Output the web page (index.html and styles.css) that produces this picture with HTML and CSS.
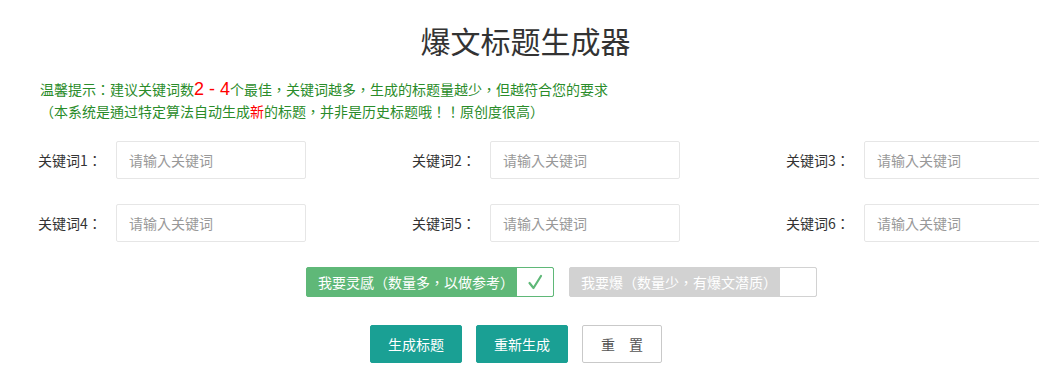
FILE: index.html
```html
<!DOCTYPE html>
<html lang="zh-CN">
<head>
  <meta charset="UTF-8">
  <meta name="viewport" content="width=device-width, initial-scale=1.0">
  <title>爆文标题生成器</title>

  <link rel="stylesheet" href="styles.css">
</head>

<body>
  <div class="page" lang="zh-TW">
    <h1 class="title" lang="zh-CN">爆文标题生成器</h1>

    <div class="tips">
      <p>温馨提示：建议关键词数<span class="num">2 - 4</span>个最佳，关键词越多，生成的标题量越少，但越符合您的要求</p>
      <p>（本系统是通过特定算法自动生成<span class="red">新</span>的标题，并非是历史标题哦！！原创度很高）</p>
    </div>

    <div class="fields">
      <div class="field">
        <label class="field-label">关键词1：</label>
        <input class="field-input" type="text" placeholder="请输入关键词">
      </div>
      <div class="field">
        <label class="field-label">关键词2：</label>
        <input class="field-input" type="text" placeholder="请输入关键词">
      </div>
      <div class="field">
        <label class="field-label">关键词3：</label>
        <input class="field-input" type="text" placeholder="请输入关键词">
      </div>
      <div class="field">
        <label class="field-label">关键词4：</label>
        <input class="field-input" type="text" placeholder="请输入关键词">
      </div>
      <div class="field">
        <label class="field-label">关键词5：</label>
        <input class="field-input" type="text" placeholder="请输入关键词">
      </div>
      <div class="field">
        <label class="field-label">关键词6：</label>
        <input class="field-input" type="text" placeholder="请输入关键词">
      </div>
    </div>

    <div class="modes">
      <div class="mode mode-on">
        <span class="mode-text">我要灵感（数量多，以做参考）</span>
        <span class="mode-box">
          <svg width="18" height="18" viewBox="0 0 18 18">
            <path d="M3.5 10 L7.5 15 L15 3" fill="none" stroke="#5fb878" stroke-width="2.2" stroke-linecap="round" stroke-linejoin="round"/>
          </svg>
        </span>
      </div>
      <div class="mode">
        <span class="mode-text">我要爆（数量少，有爆文潜质）</span>
        <span class="mode-box"></span>
      </div>
    </div>

    <div class="actions">
      <button class="btn">生成标题</button>
      <button class="btn">重新生成</button>
      <button class="btn btn-plain">重　置</button>
    </div>
  </div>
</body>
</html>
```

FILE: styles.css
```css
body {
  margin: 0;
  background-color: #fff;
  font-family: "Noto Sans CJK TC", "Noto Sans CJK SC", "Liberation Sans", sans-serif;
  color: #333;
  overflow: hidden;
}

.page {
  width: 1039px;
  overflow: hidden;
}

.title {
  margin: 0;
  padding: 18px 0 0 12px;
  font-family: "Noto Sans CJK SC", sans-serif;
  font-size: 30px;
  line-height: 44px;
  font-weight: normal;
  text-align: center;
  color: #333;
}

.tips {
  margin-top: 16px;
  padding-left: 40px;
  color: #2a8c2a;
  font-size: 14px;
  line-height: 22px;
}

.tips p {
  margin: 0;
  white-space: nowrap;
}

.tips .num {
  color: #ff0000;
  font-family: "Liberation Sans", sans-serif;
  font-size: 18px;
  line-height: 18px;
}

.tips .red {
  color: #ff0000;
}

.fields {
  margin-top: 19px;
  padding-left: 38px;
  display: grid;
  grid-template-columns: repeat(3, 374px);
  row-gap: 25px;
}

.field {
  display: flex;
  align-items: center;
}

.field-label {
  width: 78px;
  flex-shrink: 0;
  font-size: 14px;
  color: #333;
}

.field-input {
  width: 190px;
  height: 38px;
  box-sizing: border-box;
  flex-shrink: 0;
  margin: 0;
  padding: 0 12px;
  border: 1px solid #e6e6e6;
  border-radius: 2px;
  font-family: inherit;
  font-size: 14px;
  color: #333;
  outline: none;
}

.field-input::placeholder {
  color: #999;
}

.modes {
  margin-top: 25px;
  padding-left: 306px;
  display: flex;
  gap: 15px;
}

.mode {
  display: flex;
  width: 248px;
  height: 30px;
  box-sizing: border-box;
  border: 1px solid #d2d2d2;
  border-radius: 2px;
  background-color: #d2d2d2;
  overflow: hidden;
}

.mode-on {
  border-color: #5fb878;
  background-color: #5fb878;
}

.mode-text {
  flex: 1;
  padding-left: 11px;
  font-size: 14px;
  line-height: 28px;
  color: #fff;
  white-space: nowrap;
}

.mode-box {
  width: 36px;
  display: flex;
  align-items: center;
  justify-content: center;
  background-color: #fff;
  border-radius: 0 1px 1px 0;
}

.actions {
  margin-top: 28px;
  padding-left: 370px;
  display: flex;
  gap: 14px;
}

.btn {
  height: 38px;
  margin: 0;
  padding: 0 17px;
  border: 1px solid #1aa094;
  border-radius: 2px;
  background-color: #1aa094;
  color: #fff;
  font-family: inherit;
  font-size: 14px;
  line-height: 36px;
  cursor: pointer;
}

.btn-plain {
  padding: 0 18px;
  border-color: #c9c9c9;
  background-color: #fff;
  color: #555;
}
```
